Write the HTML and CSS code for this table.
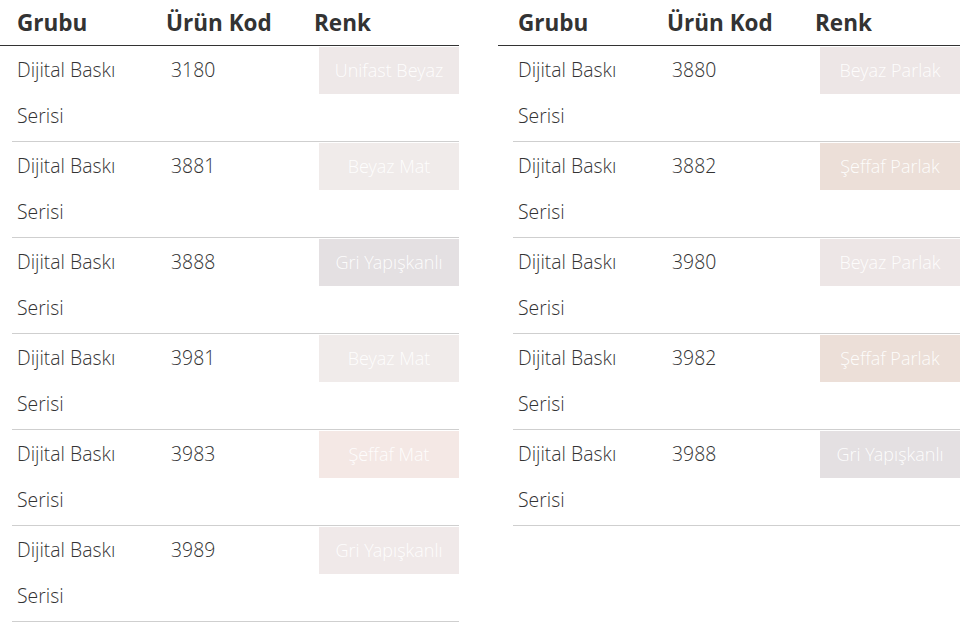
FILE: index.html
```html
<!DOCTYPE html>
<html lang="tr">
<head>
<meta charset="utf-8">
<title>Ürün Tablosu</title>
<link rel="stylesheet" href="styles.css">
</head>
<body>
<div class="page">
  <div class="tbl tbl-left">
    <div class="head">
      <div class="th th1">Grubu</div>
      <div class="th">Ürün Kod</div>
      <div class="th">Renk</div>
    </div>
    <div class="row"><div class="td td1">Dijital Baskı Serisi</div><div class="td td2">3180</div><div class="td td3"><span class="swatch c-unifast">Unifast Beyaz</span></div></div>
    <div class="row"><div class="td td1">Dijital Baskı Serisi</div><div class="td td2">3881</div><div class="td td3"><span class="swatch c-beyazmat">Beyaz Mat</span></div></div>
    <div class="row"><div class="td td1">Dijital Baskı Serisi</div><div class="td td2">3888</div><div class="td td3"><span class="swatch c-gri">Gri Yapışkanlı</span></div></div>
    <div class="row"><div class="td td1">Dijital Baskı Serisi</div><div class="td td2">3981</div><div class="td td3"><span class="swatch c-beyazmat">Beyaz Mat</span></div></div>
    <div class="row"><div class="td td1">Dijital Baskı Serisi</div><div class="td td2">3983</div><div class="td td3"><span class="swatch c-seffafmat">Şeffaf Mat</span></div></div>
    <div class="row"><div class="td td1">Dijital Baskı Serisi</div><div class="td td2">3989</div><div class="td td3"><span class="swatch c-grilight">Gri Yapışkanlı</span></div></div>
  </div>
  <div class="tbl tbl-right">
    <div class="head">
      <div class="th th1">Grubu</div>
      <div class="th">Ürün Kod</div>
      <div class="th">Renk</div>
    </div>
    <div class="row"><div class="td td1">Dijital Baskı Serisi</div><div class="td td2">3880</div><div class="td td3"><span class="swatch c-beyazparlak">Beyaz Parlak</span></div></div>
    <div class="row"><div class="td td1">Dijital Baskı Serisi</div><div class="td td2">3882</div><div class="td td3"><span class="swatch c-seffafparlak">Şeffaf Parlak</span></div></div>
    <div class="row"><div class="td td1">Dijital Baskı Serisi</div><div class="td td2">3980</div><div class="td td3"><span class="swatch c-beyazparlak">Beyaz Parlak</span></div></div>
    <div class="row"><div class="td td1">Dijital Baskı Serisi</div><div class="td td2">3982</div><div class="td td3"><span class="swatch c-seffafparlak">Şeffaf Parlak</span></div></div>
    <div class="row"><div class="td td1">Dijital Baskı Serisi</div><div class="td td2">3988</div><div class="td td3"><span class="swatch c-gri">Gri Yapışkanlı</span></div></div>
  </div>
</div>
</body>
</html>
```
FILE: styles.css
```css
html, body {
  margin: 0;
  padding: 0;
  background: #fff;
}
body {
  font-family: "Open Sans", "Liberation Sans", sans-serif;
  color: #333;
}
.page {
  display: flex;
  align-items: flex-start;
}
.tbl-left {
  width: 459px;
  margin-right: 39px;
}
.tbl-right {
  width: 462px;
}
.tbl-left .head,
.tbl-left .row {
  margin-left: 12px;
}
.tbl-right .head,
.tbl-right .row {
  margin-left: 15px;
}
.head {
  display: grid;
  grid-template-columns: 154px 149px 1fr;
  height: 45px;
  line-height: 45px;
  font-size: 22.5px;
  font-weight: 700;
  color: #333;
  position: relative;
  margin-bottom: 1px;
}
.head::after {
  content: "";
  position: absolute;
  left: -12px;
  right: 0;
  bottom: -1px;
  height: 1px;
  background: #333;
}
.tbl-right .head::after {
  left: -15px;
}
.th1 {
  padding-left: 5px;
}
.th:nth-child(3) {
  margin-left: -1px;
}
.row {
  display: grid;
  grid-template-columns: 154px 149px 1fr;
  padding: 1px 0 2px;
  border-bottom: 1px solid #cfcfcf;
  font-family: "Open Sans Light", "Open Sans", "Liberation Sans", sans-serif;
  font-size: 19.4px;
  font-weight: 300;
  line-height: 46px;
  height: 92px;
}
.td1 {
  padding-left: 5px;
  padding-right: 20px;
}
.td2 {
  padding-left: 5px;
}
.td3 {
  padding-left: 4px;
}
.swatch {
  display: block;
  height: 47px;
  line-height: 47px;
  text-align: center;
  font-size: 18px;
  font-weight: 300;
  color: rgba(255, 255, 255, 0.92);
}
.c-unifast { background: #eee8e8; }
.c-beyazmat { background: #f0ebea; }
.c-gri { background: #e4e0e2; }
.c-seffafmat { background: #f4e8e5; }
.c-grilight { background: #f0e9e9; }
.c-beyazparlak { background: #ede6e6; }
.c-seffafparlak { background: #ecdfd8; }
```
